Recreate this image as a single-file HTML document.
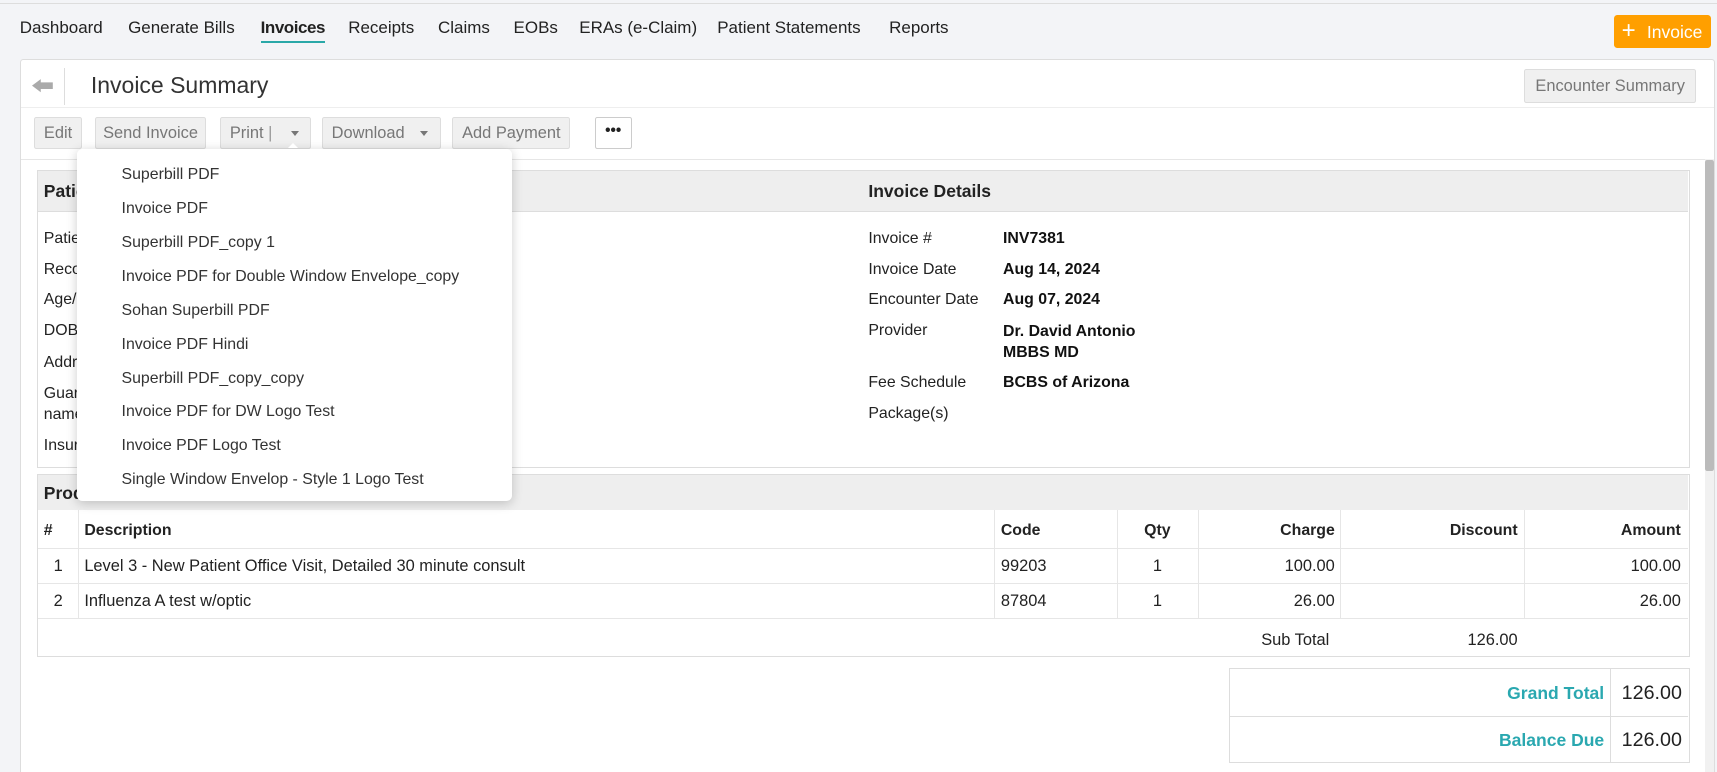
<!DOCTYPE html>
<html><head><meta charset="utf-8"><style>
html{margin:0;padding:0;background:#f3f4f7;width:1717px;height:772px;overflow:hidden}
body{margin:0;padding:0;width:1568px;height:705px;overflow:hidden;zoom:1.095;font-family:"Liberation Sans",sans-serif;color:#222;position:relative;background:#f3f4f7}
.a{position:absolute;white-space:nowrap}
.nav{top:16px;font-size:15.5px;color:#222}
.btn{position:absolute;top:107px;height:29px;box-sizing:border-box;background:#f0f0f0;border:1px solid #ddd;border-radius:2px;color:#777;font-size:15px;line-height:29px;text-align:center}
.lbl{font-size:14.5px;color:#222;margin-top:2px}
.val{font-size:14.5px;font-weight:bold;color:#111;margin-top:2px}
.dd{font-size:14.5px;color:#333;left:111px;margin-top:2px}
.th{font-size:14.5px;font-weight:bold;top:477px}
.td{font-size:15px;margin-top:1px}
.vl{position:absolute;width:1px;background:#e6e6e6}
.hl{position:absolute;height:1px;background:#e6e6e6}
</style></head><body>
<div class="a" style="left:0;top:3px;width:1568px;height:1px;background:#ddd"></div>
<div class="a nav" style="left:18px">Dashboard</div>
<div class="a nav" style="left:117px">Generate Bills</div>
<div class="a nav" style="left:238px;font-weight:bold;letter-spacing:-0.4px">Invoices</div>
<div class="a" style="left:238px;top:37px;width:59px;height:2px;background:#2aa8a8"></div>
<div class="a nav" style="left:318px">Receipts</div>
<div class="a nav" style="left:400px">Claims</div>
<div class="a nav" style="left:469px">EOBs</div>
<div class="a nav" style="left:529px">ERAs (e-Claim)</div>
<div class="a nav" style="left:655px">Patient Statements</div>
<div class="a nav" style="left:812px">Reports</div>
<div class="a" style="left:1474px;top:14px;width:89px;height:30px;background:#ff9f00;border-radius:3px;color:#fff;font-size:16px;line-height:30px"><span style="font-size:22px;position:absolute;left:7px;top:0px">+</span><span style="position:absolute;left:30px;top:1px">Invoice</span></div>

<div class="a" style="left:18px;top:54px;width:1548px;height:651px;background:#fff;border:1px solid #ddd;border-bottom:none;border-radius:3px 3px 0 0;box-sizing:border-box"></div>
<svg class="a" style="left:29px;top:71px" width="20" height="14"><path d="M0 7 L8 1 L8 4 L19 4 L19 10 L8 10 L8 13 Z" fill="#aaa"/></svg>
<div class="a" style="left:58px;top:62px;width:1px;height:34px;background:#ddd"></div>
<div class="a" style="left:83px;top:66px;font-size:21px;color:#333">Invoice Summary</div>
<div class="btn" style="left:1392px;top:63px;width:157px;height:31px;line-height:31px;font-size:15px">Encounter Summary</div>
<div class="a" style="left:19px;top:98px;width:1546px;height:1px;background:#eee"></div>
<div class="btn" style="left:31px;width:44px">Edit</div>
<div class="btn" style="left:87px;width:101px">Send Invoice</div>
<div class="btn" style="left:201px;width:83px;text-align:left;padding-left:8px">Print <span style="color:#999">|</span><span style="position:absolute;left:64px;top:12px;border:4px solid transparent;border-top:5px solid #777;width:0;height:0;line-height:0"></span></div>
<div class="btn" style="left:294px;width:109px;text-align:left;padding-left:8px">Download<span style="position:absolute;left:89px;top:12px;border:4px solid transparent;border-top:5px solid #777;width:0;height:0;line-height:0"></span></div>
<div class="btn" style="left:413px;width:108px">Add Payment</div>
<div class="btn" style="left:543px;width:34px;background:#fff;border-color:#ccc;color:#222;font-weight:bold;font-size:14px;line-height:24px">•••</div>
<div class="a" style="left:19px;top:145px;width:1538px;height:1px;background:#e6e6e6"></div>
<div class="a" style="left:1557px;top:145px;width:8px;height:560px;background:#f1f1f1"></div>
<div class="a" style="left:1557px;top:146px;width:8px;height:284px;background:#bbb;border-radius:2px"></div>

<div class="a" style="left:34px;top:155px;width:1509px;height:272px;border:1px solid #ddd;box-sizing:border-box"></div>
<div class="a" style="left:35px;top:156px;width:1507px;height:37px;background:#eee;border-bottom:1px solid #ddd"></div>
<div class="a" style="left:40px;top:165px;font-size:16px;font-weight:bold">Patient Details</div>
<div class="a" style="left:793px;top:165px;font-size:16px;font-weight:bold">Invoice Details</div>
<div class="a lbl" style="left:40px;top:208px">Patient</div>
<div class="a lbl" style="left:40px;top:236px">Record</div>
<div class="a lbl" style="left:40px;top:264px">Age/Sex</div>
<div class="a lbl" style="left:40px;top:292px">DOB</div>
<div class="a lbl" style="left:40px;top:321px">Address</div>
<div class="a lbl" style="left:40px;top:349px;line-height:19px">Guarantor<br>name</div>
<div class="a lbl" style="left:40px;top:397px">Insurance</div>
<div class="a lbl" style="left:793px;top:208px">Invoice #</div>
<div class="a lbl" style="left:793px;top:236px">Invoice Date</div>
<div class="a lbl" style="left:793px;top:264px">Encounter Date</div>
<div class="a lbl" style="left:793px;top:292px">Provider</div>
<div class="a lbl" style="left:793px;top:340px">Fee Schedule</div>
<div class="a lbl" style="left:793px;top:368px">Package(s)</div>
<div class="a val" style="left:916px;top:208px">INV7381</div>
<div class="a val" style="left:916px;top:236px">Aug 14, 2024</div>
<div class="a val" style="left:916px;top:264px">Aug 07, 2024</div>
<div class="a val" style="left:916px;top:292px;line-height:19px">Dr. David Antonio<br>MBBS MD</div>
<div class="a val" style="left:916px;top:340px">BCBS of Arizona</div>

<div class="a" style="left:34px;top:433px;width:1509px;height:167px;border:1px solid #ddd;box-sizing:border-box"></div>
<div class="a" style="left:35px;top:434px;width:1507px;height:32px;background:#eee"></div>
<div class="a" style="left:40px;top:441px;font-size:16px;font-weight:bold">Products</div>
<div class="hl" style="left:35px;top:500px;width:1507px"></div>
<div class="hl" style="left:35px;top:532px;width:1507px"></div>
<div class="hl" style="left:35px;top:564px;width:1507px"></div>
<div class="vl" style="left:71px;top:466px;height:98px"></div>
<div class="vl" style="left:908px;top:466px;height:98px"></div>
<div class="vl" style="left:1020px;top:466px;height:98px"></div>
<div class="vl" style="left:1094px;top:466px;height:98px"></div>
<div class="vl" style="left:1224px;top:466px;height:98px"></div>
<div class="vl" style="left:1392px;top:466px;height:98px"></div>
<div class="a th" style="left:40px">#</div>
<div class="a th" style="left:77px">Description</div>
<div class="a th" style="left:914px">Code</div>
<div class="a th" style="left:1020px;width:74px;text-align:center">Qty</div>
<div class="a th" style="right:349px">Charge</div>
<div class="a th" style="right:182px">Discount</div>
<div class="a th" style="right:33px">Amount</div>
<div class="a td" style="left:49px;top:508px">1</div>
<div class="a td" style="left:77px;top:508px">Level 3 - New Patient Office Visit, Detailed 30 minute consult</div>
<div class="a td" style="left:914px;top:508px">99203</div>
<div class="a td" style="left:1020px;width:74px;text-align:center;top:508px">1</div>
<div class="a td" style="right:349px;top:508px">100.00</div>
<div class="a td" style="right:33px;top:508px">100.00</div>
<div class="a td" style="left:49px;top:540px">2</div>
<div class="a td" style="left:77px;top:540px">Influenza A test w/optic</div>
<div class="a td" style="left:914px;top:540px">87804</div>
<div class="a td" style="left:1020px;width:74px;text-align:center;top:540px">1</div>
<div class="a td" style="right:349px;top:540px">26.00</div>
<div class="a td" style="right:33px;top:540px">26.00</div>
<div class="a td" style="right:354px;top:575px">Sub Total</div>
<div class="a td" style="right:182px;top:575px">126.00</div>

<div class="a" style="left:1122px;top:610px;width:421px;height:87px;border:1px solid #ddd;box-sizing:border-box"></div>
<div class="vl" style="left:1470px;top:611px;height:85px;background:#ddd"></div>
<div class="hl" style="left:1123px;top:654px;width:419px;background:#ddd"></div>
<div class="a" style="right:103px;top:624px;font-size:16px;font-weight:bold;color:#2aa8b0">Grand Total</div>
<div class="a" style="right:32px;top:623px;font-size:18px">126.00</div>
<div class="a" style="right:103px;top:667px;font-size:16px;font-weight:bold;color:#2aa8b0">Balance Due</div>
<div class="a" style="right:32px;top:666px;font-size:18px">126.00</div>

<div class="a" style="left:70px;top:136px;width:398px;height:322px;background:#fff;border-radius:5px;box-shadow:0 2px 10px rgba(0,0,0,.2)"></div>
<div class="a" style="left:263px;top:131px;border:5px solid transparent;border-bottom:5px solid #fff;border-top:0;width:0;height:0"></div>
<div class="a dd" style="top:150px">Superbill PDF</div>
<div class="a dd" style="top:181px">Invoice PDF</div>
<div class="a dd" style="top:212px">Superbill PDF_copy 1</div>
<div class="a dd" style="top:243px">Invoice PDF for Double Window Envelope_copy</div>
<div class="a dd" style="top:274px">Sohan Superbill PDF</div>
<div class="a dd" style="top:305px">Invoice PDF Hindi</div>
<div class="a dd" style="top:336px">Superbill PDF_copy_copy</div>
<div class="a dd" style="top:366px">Invoice PDF for DW Logo Test</div>
<div class="a dd" style="top:397px">Invoice PDF Logo Test</div>
<div class="a dd" style="top:428px">Single Window Envelop - Style 1 Logo Test</div>
</body></html>
